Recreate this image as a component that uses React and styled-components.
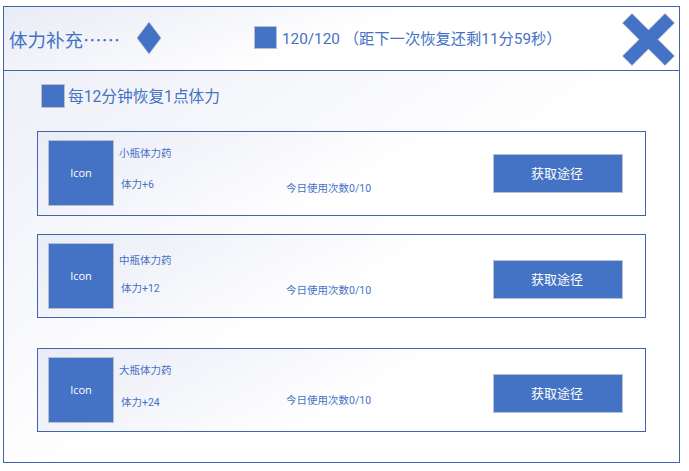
import React from "react";
import styled, { createGlobalStyle } from "styled-components";

const Global = createGlobalStyle`
  html, body {
    margin: 0;
    background: #fff;
  }
  * {
    box-sizing: border-box;
  }
`;

const Frame = styled.div`
  width: 677px;
  height: 457px;
  margin: 6px 0 0 3px;
  border: 1px solid #3f65ae;
  font-family: Roboto, "Noto Sans CJK SC", sans-serif;
  color: #4472c4;
  background: linear-gradient(145deg, #eceef7 0%, #ffffff 55%);
`;

const Header = styled.header`
  height: 64px;
  display: flex;
  align-items: center;
  padding: 0 4px 0 5px;
  border-bottom: 1px solid #3f65ae;
  background: linear-gradient(160deg, #e9ebf5 0%, #ffffff 50%);
`;

const Title = styled.div`
  width: 112px;
  font-family: "Noto Sans CJK SC", sans-serif;
  font-size: 18.5px;
  line-height: 24px;
  white-space: nowrap;
  margin-top: 1px;
`;

const Diamond = styled.svg`
  width: 26px;
  height: 34px;
  margin: -2px 0 0 15px;
`;

const Square = styled.div`
  width: ${(p) => p.$size}px;
  height: ${(p) => p.$size}px;
  flex: none;
  background: #4472c4;
  border: 1px solid #b9c0cc;
`;

const Stamina = styled.div`
  display: flex;
  align-items: center;
  gap: 5px;
  margin: -3px 0 0 92px;
  font-size: 15.3px;
  white-space: nowrap;
`;

const CloseButton = styled.svg`
  width: 53px;
  height: 53px;
  margin: 1px 0 0 auto;
`;

const Body = styled.main`
  padding: 13px 33px 0;
`;

const Hint = styled.div`
  display: flex;
  align-items: center;
  gap: 3px;
  margin-left: 4px;
  height: 24px;
  font-size: 15.7px;
  line-height: 20px;
  white-space: nowrap;
`;

const HintText = styled.span`
  margin-top: 2px;
`;

const List = styled.div`
  margin-top: 23px;
  display: flex;
  flex-direction: column;
`;

const Card = styled.section`
  width: 609px;
  height: ${(p) => p.$height}px;
  margin-bottom: ${(p) => p.$gap}px;
  display: flex;
  padding: 8px 22px 0 10px;
  border: 1px solid #3f65ae;
  background: linear-gradient(150deg, #eaecf6 0%, #ffffff 55%);
`;

const ItemIcon = styled.div`
  width: 66px;
  height: 66px;
  flex: none;
  display: flex;
  align-items: center;
  justify-content: center;
  padding-bottom: 2px;
  background: #4472c4;
  border: 1px solid #b9c0cc;
  color: #fff;
  font-family: "Open Sans", sans-serif;
  font-size: 11px;
`;

const Info = styled.div`
  width: 172px;
  flex: none;
  font-size: 10.5px;
  line-height: 14px;
  padding-left: 5px;
`;

const ItemName = styled.div`
  margin-top: ${(p) => p.$top}px;
  white-space: nowrap;
`;

const ItemEffect = styled.div`
  margin: ${(p) => p.$top}px 0 0 2px;
  white-space: nowrap;
`;

const Usage = styled.div`
  margin-top: ${(p) => p.$top}px;
  font-size: 10.5px;
  line-height: 14px;
  white-space: nowrap;
`;

const GetButton = styled.button`
  width: 130px;
  height: 39px;
  margin: ${(p) => p.$top}px 0 0 auto;
  padding: 0 2px 2px 0;
  background: #4472c4;
  border: 1px solid #b9c0cc;
  color: #fff;
  font-family: "Noto Sans CJK SC", sans-serif;
  font-size: 13px;
`;

const items = [
  { name: "小瓶体力药", effect: "体力+6", height: 85, gap: 18, nameTop: 7, effectTop: 17, usageTop: 42, buttonTop: 14 },
  { name: "中瓶体力药", effect: "体力+12", height: 84, gap: 30, nameTop: 11, effectTop: 14, usageTop: 41, buttonTop: 17 },
  { name: "大瓶体力药", effect: "体力+24", height: 84, gap: 0, nameTop: 7, effectTop: 18, usageTop: 37, buttonTop: 17 },
];

export default function App() {
  return (
    <>
      <Global />
      <Frame>
        <Header>
          <Title>体力补充……</Title>
          <Diamond viewBox="0 0 26 34">
            <path d="M13 1 L25 17 L13 33 L1 17 Z" fill="#4472c4" stroke="#b9c0cc" strokeWidth="0.6" />
          </Diamond>
          <Stamina>
            <Square $size={23} />
            <span>120/120 （距下一次恢复还剩11分59秒）</span>
          </Stamina>
          <CloseButton viewBox="0 0 53 53">
            <path
              d="M10 0.5 L26.5 17 L43 0.5 L52.5 10 L36 26.5 L52.5 43 L43 52.5 L26.5 36 L10 52.5 L0.5 43 L17 26.5 L0.5 10 Z"
              fill="#4472c4"
              stroke="#b9c0cc"
              strokeWidth="0.6"
            />
          </CloseButton>
        </Header>
        <Body>
          <Hint>
            <Square $size={24} />
            <HintText>每12分钟恢复1点体力</HintText>
          </Hint>
          <List>
            {items.map((item) => (
              <Card key={item.name} $height={item.height} $gap={item.gap}>
                <ItemIcon>Icon</ItemIcon>
                <Info>
                  <ItemName $top={item.nameTop}>{item.name}</ItemName>
                  <ItemEffect $top={item.effectTop}>{item.effect}</ItemEffect>
                </Info>
                <Usage $top={item.usageTop}>今日使用次数0/10</Usage>
                <GetButton $top={item.buttonTop}>获取途径</GetButton>
              </Card>
            ))}
          </List>
        </Body>
      </Frame>
    </>
  );
}
